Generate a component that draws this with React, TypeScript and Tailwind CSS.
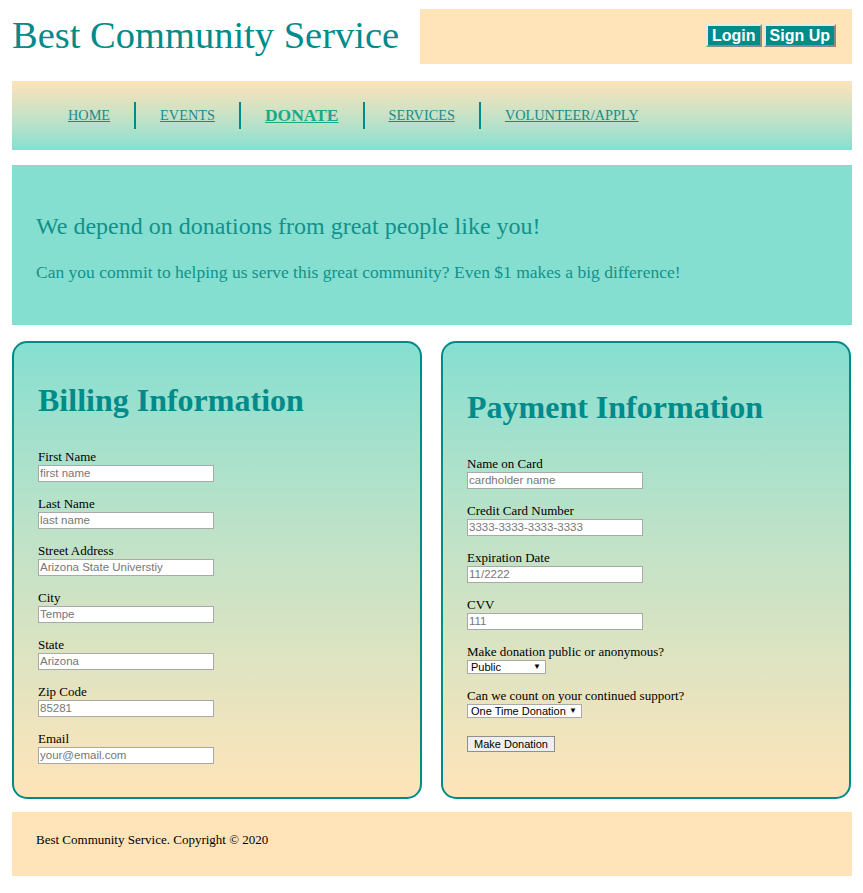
import React from 'react';

const serif = { fontFamily: '"Liberation Serif", "Times New Roman", serif' };

const billingFields = [
  { label: 'First Name', placeholder: 'first name' },
  { label: 'Last Name', placeholder: 'last name' },
  { label: 'Street Address', placeholder: 'Arizona State Universtiy' },
  { label: 'City', placeholder: 'Tempe' },
  { label: 'State', placeholder: 'Arizona' },
  { label: 'Zip Code', placeholder: '85281' },
  { label: 'Email', placeholder: 'your@email.com' },
];

const paymentFields = [
  { label: 'Name on Card', placeholder: 'cardholder name' },
  { label: 'Credit Card Number', placeholder: '3333-3333-3333-3333' },
  { label: 'Expiration Date', placeholder: '11/2222' },
  { label: 'CVV', placeholder: '111' },
];

const navLinks = ['HOME', 'EVENTS', 'DONATE', 'SERVICES', 'VOLUNTEER/APPLY'];

const Field: React.FC<{ label: string; placeholder: string }> = ({ label, placeholder }) => (
  <div className="flex flex-col">
    <label className="text-[13px] leading-[15px] text-black">{label}</label>
    <input
      placeholder={placeholder}
      className="mt-[1px] w-[176px] h-[17px] border border-[#a9a9a9] bg-white px-[1px] text-[11.5px] font-['Liberation_Sans',Arial,sans-serif] placeholder:text-[#777] outline-none"
    />
  </div>
);

const Dropdown: React.FC<{ label: string; options: string[]; width: string }> = ({ label, options, width }) => (
  <div className="flex flex-col">
    <label className="text-[13px] leading-[15px] text-black">{label}</label>
    <div className={`relative mt-[1px] ${width}`}>
      <select className="block w-full h-[14px] appearance-none border border-[#a9a9a9] bg-white py-0 pl-[3px] text-[11px] leading-[12px] font-['Liberation_Sans',Arial,sans-serif] text-black outline-none">
        {options.map((o) => (
          <option key={o}>{o}</option>
        ))}
      </select>
      <span className="pointer-events-none absolute right-[5px] top-[2px] text-[8px] leading-[9px] text-black">▼</span>
    </div>
  </div>
);

export default function App() {
  return (
    <div className="min-h-screen bg-white px-3 pt-[9px] pb-[17px]" style={serif}>
      {/* header */}
      <header className="flex w-[840px]">
        <h1 className="w-[408px] pt-[3px] text-[38.5px] leading-[46px] text-[#008b8b]">Best Community Service</h1>
        <div className="flex h-[55px] w-[432px] items-center justify-end bg-[#ffe4b9] pr-[16px]">
          <div className="mt-[-2px] flex gap-[2px] font-['Liberation_Sans',Arial,sans-serif] text-[16px] font-bold leading-[17px] text-white">
            <button className="border-2 border-t-[#e6e6e6] border-l-[#e6e6e6] border-b-[#8a8a8a] border-r-[#8a8a8a] bg-[#008b8b] px-[4px] py-[1px]">Login</button>
            <button className="border-2 border-t-[#e6e6e6] border-l-[#e6e6e6] border-b-[#8a8a8a] border-r-[#8a8a8a] bg-[#008b8b] px-[4px] py-[1px]">Sign Up</button>
          </div>
        </div>
      </header>

      {/* nav */}
      <nav className="mt-[17px] flex h-[69px] w-[840px] items-center bg-gradient-to-b from-[#fde3b9] to-[#85dfd1] pl-[56px]">
        {navLinks.map((link, i) => (
          <React.Fragment key={link}>
            {i > 0 && <span className="mx-[24px] h-[27px] w-[2px] bg-[#008b8b]" />}
            <a
              href="#"
              className={
                link === 'DONATE'
                  ? 'text-[17.5px] font-bold text-[#1aa88a] underline'
                  : 'text-[14.3px] text-[#1a8b8b] underline'
              }
            >
              {link}
            </a>
          </React.Fragment>
        ))}
      </nav>

      {/* banner */}
      <section className="mt-[15px] flex h-[160px] w-[840px] flex-col justify-center bg-[#85dfd1] px-[24px] pt-[4px] text-[#12918a]">
        <h2 className="text-[24px] leading-[28px]">We depend on donations from great people like you!</h2>
        <p className="mt-[22px] text-[17.5px] leading-[20px]">
          Can you commit to helping us serve this great community? Even $1 makes a big difference!
        </p>
      </section>

      {/* forms */}
      <div className="mt-[16px] flex w-[840px] gap-[19px]">
        <div className="h-[458px] w-[410px] rounded-[15px] border-2 border-[#008b8b] bg-gradient-to-b from-[#85dfd1] to-[#ffe4b9] pl-[24px] pt-[37px]">
          <h2 className="text-[32px] font-bold leading-[40px] text-[#008b8b]">Billing Information</h2>
          <div className="mt-[29px] flex flex-col gap-[14px]">
            {billingFields.map((f) => (
              <Field key={f.label} {...f} />
            ))}
          </div>
        </div>
        <div className="h-[458px] w-[410px] rounded-[15px] border-2 border-[#008b8b] bg-gradient-to-b from-[#85dfd1] to-[#ffe4b9] pl-[24px] pt-[44px]">
          <h2 className="text-[32px] font-bold leading-[40px] text-[#008b8b]">Payment Information</h2>
          <div className="mt-[29px] flex flex-col gap-[14px]">
            {paymentFields.map((f) => (
              <Field key={f.label} {...f} />
            ))}
            <Dropdown label="Make donation public or anonymous?" options={['Public', 'Anonymous']} width="w-[79px]" />
            <Dropdown label="Can we count on your continued support?" options={['One Time Donation', 'Monthly Donation']} width="w-[115px]" />
            <div className="pt-[4px]">
              <button className="block h-[16px] border border-[#8f8f8f] bg-[#efefef] px-[6px] text-[11px] leading-[12px] font-['Liberation_Sans',Arial,sans-serif] text-black">
                Make Donation
              </button>
            </div>
          </div>
        </div>
      </div>

      {/* footer */}
      <footer className="mt-[13px] flex h-[64px] w-[840px] items-center bg-[#ffe4b9] px-[24px] pb-[8px] text-[13px] text-black">
        Best Community Service. Copyright © 2020
      </footer>
    </div>
  );
}
